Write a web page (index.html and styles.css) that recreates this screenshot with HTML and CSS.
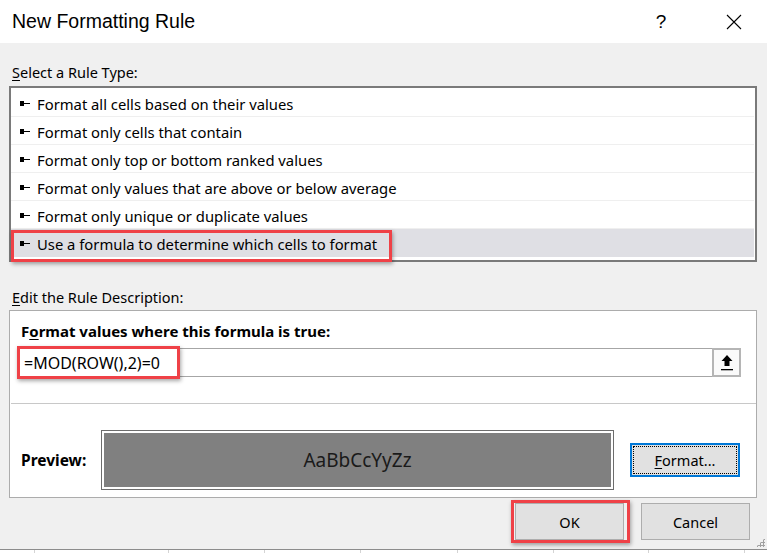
FILE: index.html
```html
<!DOCTYPE html>
<html lang="en">
<head>
  <meta charset="UTF-8">
  <title>New Formatting Rule</title>
  <link rel="stylesheet" href="styles.css">
</head>
<body>

  <div class="dialog">
    <!-- Barra de titulo -->
    <div class="titlebar">
      <span class="title">New Formatting Rule</span>
      <span class="help">?</span>
      <span class="close">
        <svg width="16" height="16" viewBox="0 0 16 16"><path d="M1 1L15 15M15 1L1 15" stroke="#000" stroke-width="1.1" fill="none"/></svg>
      </span>
    </div>

    <div class="content">
      <div class="label"><u>S</u>elect a Rule Type:</div>

      <div class="listbox">
        <div class="item"><span class="bullet"></span>Format all cells based on their values</div>
        <div class="item"><span class="bullet"></span>Format only cells that contain</div>
        <div class="item"><span class="bullet"></span>Format only top or bottom ranked values</div>
        <div class="item"><span class="bullet"></span>Format only values that are above or below average</div>
        <div class="item"><span class="bullet"></span>Format only unique or duplicate values</div>
        <div class="item selected"><span class="bullet"></span>Use a formula to determine which cells to format</div>
        <div class="highlight hl-rule"></div>
      </div>

      <div class="label label-edit"><u>E</u>dit the Rule Description:</div>

      <div class="panel">
        <div class="panel-title">F<u>o</u>rmat values where this formula is true:</div>
        <div class="formula">
          <span class="formula-text">=MOD(ROW(),2)=0</span>
          <span class="collapse">
            <svg width="14" height="17" viewBox="0 0 14 17"><path d="M7 1L1.5 7H4.5V12H9.5V7H12.5Z" fill="#000"/><rect x="1" y="15" width="12" height="1.3" fill="#000"/></svg>
          </span>
          <div class="highlight hl-formula"></div>
        </div>
        <div class="separator"></div>
        <div class="preview-row">
          <span class="preview-label">Preview:</span>
          <div class="preview-box"><div class="preview-fill">AaBbCcYyZz</div></div>
          <button class="btn btn-focus"><span class="focus-ring"><u>F</u>ormat...</span></button>
        </div>
      </div>

      <div class="footer">
        <button class="btn btn-big">OK<div class="highlight hl-ok"></div></button>
        <button class="btn btn-big">Cancel</button>
      </div>
      <span class="grip"></span>
    </div>
  </div>

  <!-- Planilha atras do dialogo -->
  <div class="sheet">
    <span class="col c1"></span><span class="col c2"></span><span class="col c3"></span><span class="col c4"></span>
    <span class="col c5"></span><span class="col c6"></span><span class="col c7"></span><span class="col c8"></span>
  </div>

</body>
</html>
```

FILE: styles.css
```css
* {
  box-sizing: border-box;
}

body {
  margin: 0;
  padding: 0;
  width: 767px;
  height: 553px;
  overflow: hidden;
  background: #fff;
  font-family: 'Noto Sans', sans-serif;
  font-size: 14.5px;
  color: #000;
}

u {
  text-decoration: underline;
  text-underline-offset: 2px;
}

.dialog {
  height: 550px;
  display: flex;
  flex-direction: column;
  border-bottom: 1px solid #8c8c8c;
}

.titlebar {
  height: 43px;
  background: #fff;
  display: flex;
  align-items: center;
  padding-left: 12px;
}

.title {
  flex: 1;
  font-family: 'Liberation Sans Narrow', 'Liberation Sans', sans-serif;
  font-size: 19.5px;
}

.help {
  font-family: 'Liberation Sans Narrow', 'Liberation Sans', sans-serif;
  font-size: 19px;
  width: 20px;
  text-align: center;
  margin-right: 55px;
}

.close {
  display: flex;
  margin-right: 25px;
}

.content {
  flex: 1;
  background: #f0f0f0;
  padding: 19px 10px 0 9px;
  position: relative;
}

.label {
  height: 20px;
  line-height: 20px;
  padding-left: 3px;
}

.listbox {
  position: relative;
  margin-top: 4px;
  background: #fff;
  border: 2px solid #7a7a7a;
  padding: 1px 1px 3px 0;
}

.item {
  height: 28px;
  display: flex;
  align-items: center;
  padding: 2px 0 0 9px;
  border-bottom: 1px solid #efefef;
  font-size: 14.8px;
}

.item.selected {
  background: #dfdfe4;
  border-bottom: none;
}

.bullet {
  width: 10px;
  height: 6px;
  margin-right: 7px;
  background: linear-gradient(#000, #000) 0 0 / 4px 5px no-repeat,
              linear-gradient(#000, #000) 0 2px / 10px 1.4px no-repeat;
}

.highlight {
  position: absolute;
  border: 3px solid #ef4147;
  box-shadow: 1px 2px 4px rgba(0,0,0,0.35);
  pointer-events: none;
}

.hl-rule {
  left: 0;
  top: 142px;
  width: 381px;
  height: 32px;
}

.label-edit {
  margin-top: 25px;
}

.panel {
  margin-top: 3px;
  height: 188px;
  background: #fff;
  border: 1px solid #acacac;
  padding: 0 15px 0 8px;
}

.panel-title {
  font-weight: bold;
  font-size: 15px;
  height: 20px;
  line-height: 20px;
  margin-top: 10px;
  padding-left: 3px;
}

.formula {
  position: relative;
  margin-top: 7px;
  height: 29px;
  border: 1px solid #a6a6a6;
  display: flex;
  align-items: center;
  font-size: 16px;
}

.formula-text {
  flex: 1;
  padding-left: 5px;
}

.collapse {
  width: 29px;
  height: 29px;
  margin: -1px -1px -1px 0;
  border: 2px solid #b5b5b5;
  background: #fafafa;
  display: flex;
  align-items: center;
  justify-content: center;
}

.hl-formula {
  left: -2px;
  top: -3px;
  width: 163px;
  height: 33px;
}

.separator {
  height: 1px;
  background: #c8c8c8;
  margin: 26px -15px 0 -7px;
}

.preview-row {
  display: flex;
  align-items: center;
  margin-top: 26px;
}

.preview-label {
  font-weight: bold;
  font-size: 15.5px;
  width: 83px;
  padding-left: 3px;
}

.preview-box {
  width: 513px;
  height: 60px;
  border: 1px solid #6d6d6d;
  padding: 2px;
}

.preview-fill {
  height: 100%;
  background: #808080;
  display: flex;
  align-items: center;
  justify-content: center;
  font-size: 19px;
  color: #1a1a1a;
}

.btn {
  font-family: 'Noto Sans', sans-serif;
  font-size: 14.5px;
  color: #000;
  background: #e1e1e1;
  border: 1px solid #adadad;
  padding: 0;
  position: relative;
}

.btn-focus {
  width: 110px;
  height: 34px;
  margin-left: 16px;
  border: 2px solid #0078d7;
  padding: 1px;
}

.focus-ring {
  display: flex;
  align-items: center;
  justify-content: center;
  height: 100%;
  border: 1px dotted #000;
}

.footer {
  display: flex;
  justify-content: flex-end;
  gap: 17px;
  margin-top: 5px;
  padding-right: 7px;
}

.btn-big {
  width: 109px;
  height: 37px;
}

.hl-ok {
  left: -5px;
  top: -4px;
  width: 119px;
  height: 43px;
}

.grip {
  position: absolute;
  right: 2px;
  bottom: 2px;
  width: 9px;
  height: 9px;
  background: radial-gradient(circle, #a0a0a0 1px, transparent 1.2px) 0 0 / 3px 3px;
  clip-path: polygon(100% 0, 100% 100%, 0 100%);
}

.sheet {
  position: relative;
  height: 3px;
}

.col {
  position: absolute;
  top: 0;
  width: 1px;
  height: 3px;
  background: #d4d4d4;
}

.c1 { left: 34px; }
.c2 { left: 168px; }
.c3 { left: 264px; }
.c4 { left: 360px; }
.c5 { left: 457px; }
.c6 { left: 553px; }
.c7 { left: 648px; }
.c8 { left: 744px; }
```
